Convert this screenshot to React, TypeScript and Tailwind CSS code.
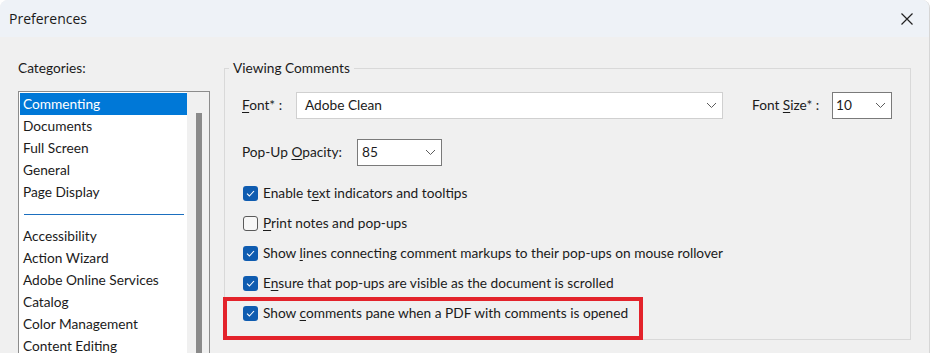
const categoriesTop = ['Commenting', 'Documents', 'Full Screen', 'General', 'Page Display']
const categoriesBottom = ['Accessibility', 'Action Wizard', 'Adobe Online Services', 'Catalog', 'Color Management', 'Content Editing']

function Chevron() {
  return (
    <svg width="11" height="7" viewBox="0 0 11 7" className="text-[#5c5c5c]">
      <polyline points="1,1 5.5,5.5 10,1" fill="none" stroke="currentColor" strokeWidth="1" />
    </svg>
  )
}

function Check({ checked }: { checked: boolean }) {
  if (!checked) {
    return <span className="w-[15px] h-[15px] rounded-[3px] border border-[#5a5a5a] bg-[#f7f7f7] shrink-0" />
  }
  return (
    <span className="w-[15px] h-[15px] rounded-[3px] bg-[#0f5cb0] flex items-center justify-center shrink-0">
      <svg width="9" height="7" viewBox="0 0 9 7">
        <polyline points="1,3.6 3.4,6 8,1" fill="none" stroke="white" strokeWidth="1.1" />
      </svg>
    </span>
  )
}

// label with one underlined access-key letter
function Accel({ pre, key_, post }: { pre: string; key_: string; post: string }) {
  return (
    <span>
      {pre}
      <span className="underline underline-offset-2 decoration-1">{key_}</span>
      {post}
    </span>
  )
}

const options = [
  { checked: true, pre: 'Enable t', key_: 'e', post: 'xt indicators and tooltips' },
  { checked: false, pre: '', key_: 'P', post: 'rint notes and pop-ups' },
  { checked: true, pre: 'Show ', key_: 'l', post: 'ines connecting comment markups to their pop-ups on mouse rollover' },
  { checked: true, pre: 'E', key_: 'n', post: 'sure that pop-ups are visible as the document is scrolled' },
  { checked: true, pre: 'Show ', key_: 'c', post: 'omments pane when a PDF with comments is opened' },
]

export default function App() {
  return (
    <div className="w-[932px] h-[353px] bg-white overflow-hidden">
      <div className="relative w-[930px] h-[353px] rounded-tl-[8px] rounded-tr-[8px] border-r border-[#d6d6d6] bg-[#f0f0f0] overflow-hidden text-[#1b1b1b] [font-family:Lato,'Liberation_Sans',sans-serif] text-[13.7px]">
        {/* Title bar */}
        <div className="h-[37px] bg-[#eef2f7] flex items-center justify-between pl-[9px] pr-[16px]">
          <span className="[font-family:'Open_Sans',sans-serif] text-[14px] text-[#1a1a1a]">Preferences</span>
          <svg width="12" height="12" viewBox="0 0 12 12" className="text-[#222]">
            <path d="M0.5 0.5 L11.5 11.5 M11.5 0.5 L0.5 11.5" stroke="currentColor" strokeWidth="1.2" fill="none" />
          </svg>
        </div>

        {/* Body */}
        <div className="flex">
          {/* Left pane */}
          <div className="w-[224px] shrink-0 pl-[18px] pt-[22px]">
            <div className="leading-[18px]">Categories:</div>
            <div className="mt-[14px] w-[192px] h-[270px] border border-[#8c8c8c] bg-white flex overflow-hidden">
              <div className="w-[168px] pl-[1px] pt-[1px]">
                {categoriesTop.map((c, i) => (
                  <div
                    key={c}
                    className={
                      i === 0
                        ? 'h-[22px] leading-[22px] pl-[3px] bg-[#0078d7] text-white'
                        : 'h-[22px] leading-[22px] pl-[3px]'
                    }
                  >
                    {c}
                  </div>
                ))}
                <div className="h-[22px] flex items-center pl-[4px] pr-[3px]">
                  <div className="h-px w-full bg-[#1b6fbf]" />
                </div>
                {categoriesBottom.map(c => (
                  <div key={c} className="h-[22px] leading-[22px] pl-[3px] whitespace-nowrap">
                    {c}
                  </div>
                ))}
              </div>
              <div className="flex-1 bg-[#f0f0f0] flex justify-center pt-[21px]">
                <div className="w-[6px] ml-[2px] h-[300px] bg-[#8a8a8a]" />
              </div>
            </div>
          </div>

          {/* Right pane */}
          <div className="pt-[22px]">
            <fieldset className="w-[687px] h-[281px] border border-[#d9d9d9] p-0">
              <legend className="ml-[4px] px-[4px] leading-[18px]">Viewing Comments</legend>

              <div className="pl-[17px]">
                <div className="flex items-center mt-[15px] h-[27px]">
                  <span className="w-[54px]">
                    <Accel pre="" key_="F" post="ont* :" />
                  </span>
                  <div className="w-[427px] h-[27px] bg-white border border-[#d0d0d0] flex items-center justify-between pl-[8px] pr-[5px]">
                    <span>Adobe Clean</span>
                    <Chevron />
                  </div>
                  <span className="ml-[29px] w-[80px]">
                    <Accel pre="Font " key_="S" post="ize* :" />
                  </span>
                  <div className="w-[60px] h-[27px] bg-white border border-[#7a7a7a] flex items-center justify-between pl-[3px] pr-[5px]">
                    <span>10</span>
                    <Chevron />
                  </div>
                </div>

                <div className="flex items-center mt-[20px] h-[27px]">
                  <span className="w-[115px]">
                    <Accel pre="Pop-Up " key_="O" post="pacity:" />
                  </span>
                  <div className="w-[85px] h-[27px] bg-white border border-[#7a7a7a] flex items-center justify-between pl-[4px] pr-[5px]">
                    <span>85</span>
                    <Chevron />
                  </div>
                </div>

                <div className="mt-[12px] flex flex-col">
                  {options.map(o => (
                    <div key={o.post} className="h-[30px] flex items-center gap-[5px] pl-[1px]">
                      <Check checked={o.checked} />
                      <Accel pre={o.pre} key_={o.key_} post={o.post} />
                    </div>
                  ))}
                </div>
              </div>
            </fieldset>
          </div>
        </div>

        {/* annotation highlight */}
        <div className="absolute left-[223px] top-[297px] w-[420px] h-[43px] border-4 border-[#e3232b] pointer-events-none" />
      </div>
    </div>
  )
}
